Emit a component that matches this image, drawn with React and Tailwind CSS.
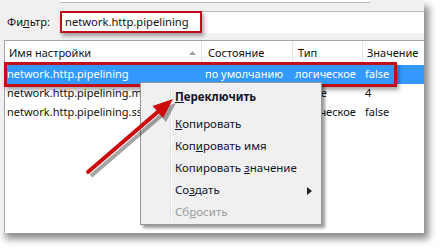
const rows = [
  { name: 'network.http.pipelining', state: 'по умолчанию', type: 'логическое', value: 'false', selected: true },
  { name: 'network.http.pipelining.maxrequests', state: 'по умолчанию', type: 'целое', value: '4' },
  { name: 'network.http.pipelining.ssl', state: 'по умолчанию', type: 'логическое', value: 'false' },
]

function MenuItem({ children, bold, disabled, sub }) {
  return (
    <div className={`relative h-[22px] flex items-center pl-[34px] whitespace-pre ${bold ? 'font-bold' : ''} ${disabled ? 'text-[#9a9ba0]' : 'text-[#10142a]'}`}>
      {children}
      {sub && (
        <svg className="absolute left-[166px] top-[8px]" width="5" height="8" viewBox="0 0 5 8">
          <path d="M0 0 L5 4 L0 8 Z" fill="#222" />
        </svg>
      )}
    </div>
  )
}

export default function App() {
  return (
    <div className="relative w-[441px] h-[251px] bg-white overflow-hidden font-['Noto_Sans',sans-serif] text-[11px] text-[#111]">
      <div className="w-[424px] h-[233px] bg-[#f0f0f0] flex flex-col shadow-[5px_6px_7px_rgba(0,0,0,0.45)]">
        <div className="h-[11px] flex">
          <div className="ml-[60px] w-[310px] h-[3px] bg-white border-b border-[#b8b8b8]" />
        </div>
        <div className="h-[22px] flex items-center text-[11.2px]">
          <div className="w-[60px] pl-[7px]">Фи<span className="underline">л</span>ьтр:</div>
          <div className="flex-1 h-full bg-white border-t border-[#b9bcc2] flex items-center pl-[5px]">network.http.pipelining</div>
        </div>
        <div className="h-[7px]" />
        <div className="flex-1 ml-[4px] bg-white border-l border-t border-[#a3a7ad]">
          <div className="h-[24px] grid grid-cols-[197px_91px_70px_1fr] items-center">
            <div className="relative h-full flex items-center pl-[4px] border-r border-[#e3e5e8]">
              Имя настройки
              <svg className="absolute left-[184px] top-[10px]" width="7" height="4" viewBox="0 0 7 4">
                <path d="M0 4 L3.5 0 L7 4 Z" fill="#9aa0a8" />
              </svg>
            </div>
            <div className="h-full flex items-center pl-[6px] border-r border-[#e3e5e8]">Состояние</div>
            <div className="h-full flex items-center pl-[5px] border-r border-[#e3e5e8]">Тип</div>
            <div className="h-full flex items-center pl-[4px]">Значение</div>
          </div>
          {rows.map((r, i) => (
            <div key={i} className={`h-[19px] grid grid-cols-[197px_91px_70px_1fr] items-center whitespace-nowrap ${r.selected ? 'bg-[#3399ff] text-white' : ''}`}>
              <div className="pl-[2px] overflow-hidden">{r.name}</div>
              <div className="pl-[3px] overflow-hidden">{r.state}</div>
              <div className="pl-[2px] overflow-hidden">{r.type}</div>
              <div className="pl-[2px] overflow-hidden">{r.value}</div>
            </div>
          ))}
        </div>
      </div>

      {/* annotation boxes */}
      <div className="absolute left-[60px] top-[11px] w-[142px] h-[22px] border-2 border-[#c20e1a] shadow-[2px_3px_4px_rgba(0,0,0,0.35)]" />
      <div className="absolute left-[4px] top-[62px] w-[393px] h-[25px] border-[3px] border-[#c20e1a] shadow-[2px_3px_4px_rgba(0,0,0,0.35)]" />

      {/* context menu */}
      <div className="absolute left-[140px] top-[82px] w-[182px] h-[143px] bg-[#f0f0f0] border border-[#979797] pt-[3px] text-[11.5px] shadow-[3px_3px_3px_rgba(0,0,0,0.4)]">
        <div className="absolute left-[29px] top-[2px] bottom-[2px] w-[2px] border-l border-[#e2e3e3] border-r border-r-white" />
        <MenuItem bold><span className="underline">П</span>ереключить</MenuItem>
        <div className="h-[5px]" />
        <MenuItem><span className="underline">К</span>опировать</MenuItem>
        <MenuItem>Коп<span className="underline">и</span>ровать имя</MenuItem>
        <MenuItem>{'Копировать '}<span className="underline">з</span>начение</MenuItem>
        <MenuItem sub>Со<span className="underline">з</span>дать</MenuItem>
        <MenuItem disabled>Сб<span className="underline">р</span>осить</MenuItem>
      </div>

      {/* arrow */}
      <svg className="absolute left-0 top-0" width="441" height="251" viewBox="0 0 441 251">
        <g transform="translate(3 4)" opacity="0.35">
          <line x1="88" y1="172" x2="160" y2="110" stroke="#000" strokeWidth="4" />
          <path d="M173 99 L163 118 L152.6 105.9 Z" fill="#000" />
        </g>
        <line x1="88" y1="172" x2="160" y2="110" stroke="#cc0a0a" strokeWidth="4" strokeLinecap="round" />
        <path d="M173 99 L163 118 L152.6 105.9 Z" fill="#cc0a0a" />
      </svg>
    </div>
  )
}
